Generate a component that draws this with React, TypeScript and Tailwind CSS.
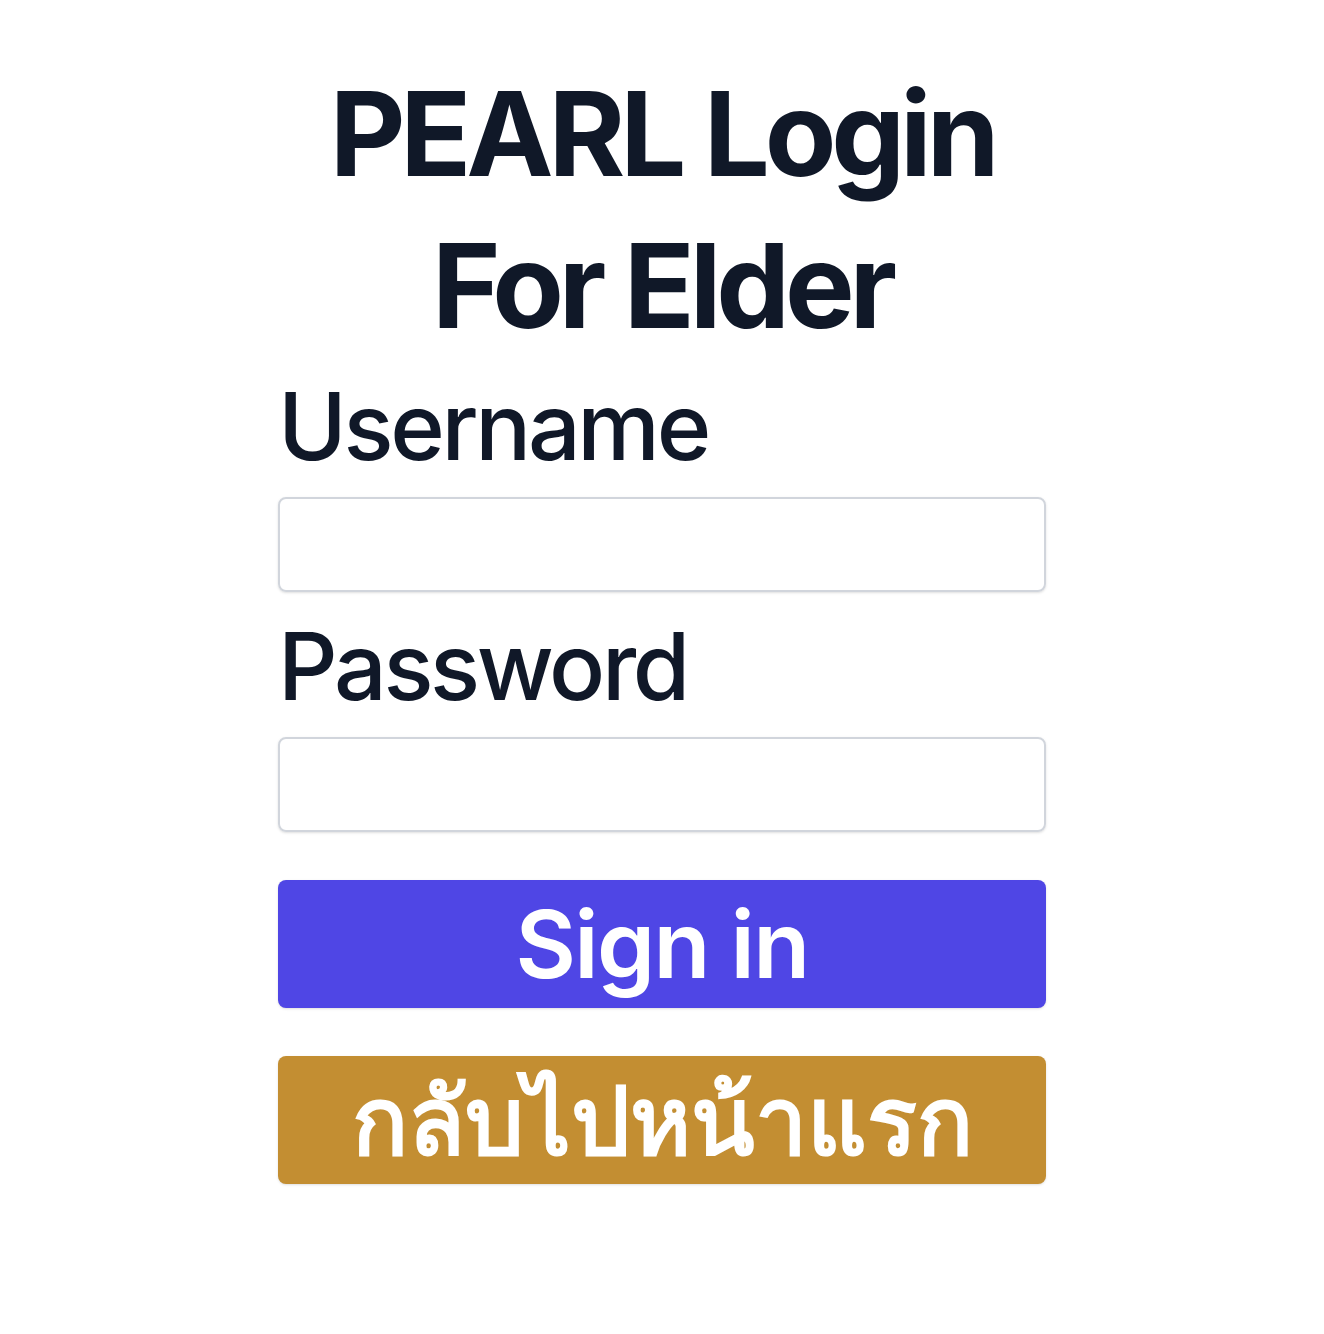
export default function App() {
  return (
    <div className="min-h-screen bg-white flex flex-col items-center font-['Inter','Noto_Sans',sans-serif] text-gray-900">
      <h2 className="mt-[58px] text-center text-[117px] font-bold leading-[152px] tracking-[-0.044em] text-gray-900">
        PEARL Login
        <br />
        For Elder
      </h2>
      <form className="w-[768px] mt-[8px]" onSubmit={(e) => e.preventDefault()}>
        <label htmlFor="username" className="block text-[93px] font-medium leading-[112px] tracking-[-0.036em]">
          Username
        </label>
        <input
          id="username"
          type="text"
          className="mt-[15px] block w-full h-[95px] rounded-lg border-2 border-gray-300 shadow-sm"
        />
        <label htmlFor="password" className="mt-[18px] block text-[93px] font-medium leading-[112px] tracking-[-0.036em]">
          Password
        </label>
        <input
          id="password"
          type="password"
          className="mt-[15px] block w-full h-[95px] rounded-lg border-2 border-gray-300 shadow-sm"
        />
        <button
          type="submit"
          className="mt-[48px] flex w-full h-[128px] items-center justify-center rounded-lg bg-[#4f46e5] text-[93px] font-semibold leading-[112px] tracking-[-0.018em] text-white shadow-sm"
        >
          Sign in
        </button>
        <button
          type="button"
          className="mt-[48px] flex w-full h-[128px] items-center justify-center rounded-lg bg-[#c38e32] text-[93px] font-semibold leading-[112px] text-white shadow-sm"
        >
          กลับไปหน้าแรก
        </button>
      </form>
    </div>
  );
}
